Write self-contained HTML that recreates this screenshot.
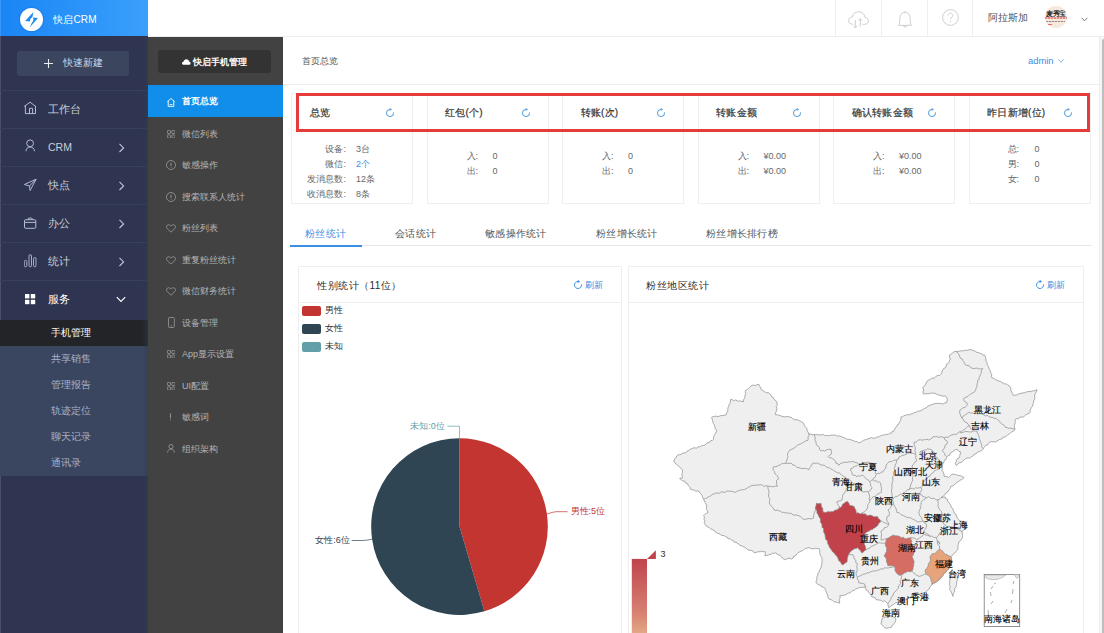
<!DOCTYPE html>
<html><head><meta charset="utf-8">
<style>
*{box-sizing:border-box;margin:0;padding:0}
html,body{width:1104px;height:633px;overflow:hidden;background:#fff;font-family:"Liberation Sans",sans-serif;color:#333}
.abs{position:absolute}
#side{left:0;top:0;width:148px;height:633px;background:#2f3550}
#logo{left:0;top:0;width:148px;height:36px;background:linear-gradient(90deg,#1a85f5,#3aa0fd)}
#logo .c{left:20px;top:7.6px;width:23px;height:23px;border-radius:50%;background:#fff;box-shadow:0 0 2px rgba(0,40,120,0.35)}
#logo .t{left:53.2px;top:13px;font-size:10px;color:#fff;line-height:14px;letter-spacing:0.15px}
#newbtn{left:17px;top:51px;width:112px;height:25px;background:#3c455e;border-radius:3px;color:#d5dae3;font-size:10.2px;line-height:25px}
.sep{left:0;width:148px;height:1px;background:#394059}
.mi{left:0;width:148px;height:38px;color:#c9ced8;font-size:10.5px}
.mi .tx{position:absolute;left:48px;top:12px;line-height:14px}
.mi svg{position:absolute}
.sub{left:0;width:148px;height:26px;font-size:9.8px;color:#aab3c5;line-height:26px;padding-left:50.5px}
#side2{left:148px;top:37px;width:135px;height:596px;background:#424242}
#mbtn{left:158px;top:50px;width:113px;height:23px;background:#333;border-radius:3px;color:#fff;font-weight:bold;font-size:9.5px;line-height:23px;text-align:center}
.si{left:148px;width:135px;height:32px;font-size:9px;color:#b5b5b5;line-height:32px;padding-left:34px}
.si svg{position:absolute}
#hdr{left:148px;top:0;width:956px;height:37px;background:#fff;border-bottom:1px solid #ededed}
.vs{top:0;width:1px;height:36px;background:#eeeeee}
#crumb{left:302px;top:55px;font-size:9px;color:#555;line-height:12px}
#admin{left:1028px;top:55.2px;font-size:9.4px;color:#3a8ee6;line-height:12px}
.card{width:122px;height:111px;top:93px;border:1px solid #efefef;background:#fff}
.card .h{position:absolute;left:0;top:0;width:120px;height:37px;border-bottom:1px solid #f0f0f0}
.card .ht{position:absolute;left:17.5px;top:12px;font-size:10px;letter-spacing:0.25px;color:#333;line-height:13px;-webkit-text-stroke:0.2px #333}
.card svg.r{position:absolute;left:93px;top:13.5px}
.row{position:absolute;font-size:9px;color:#666;line-height:12px;white-space:nowrap}
.tab{top:227px;font-size:10px;color:#555;line-height:13px;letter-spacing:0.25px}
.panel{border:1px solid #efefef;background:#fff}
.ptitle{font-size:10px;color:#2a2a2a;line-height:13px;letter-spacing:0.5px}
.refresh{font-size:9px;color:#3a88e0;line-height:12px;margin-top:0.4px}
.lg{left:302px;width:19px;height:10px;border-radius:2px}
.lgt{left:324.5px;font-size:9px;color:#333;line-height:12px;margin-top:-0.5px}
</style></head><body>

<!-- left sidebar -->
<div id="side" class="abs"></div>
<div id="logo" class="abs">
  <div class="c abs"></div>
  <svg class="abs" style="left:20px;top:8px" width="23" height="23" viewBox="0 0 23 23"><path d="M13.5 4.1 L5.1 13.1 L10.2 13.6 C9.6 12.3 10 10.6 12.4 8.9 Z" fill="#1a8cf0"/><path d="M18 10 L12.6 9.4 C13.8 10.6 13.8 12.6 12 14.6 L9.6 19.4 Z" fill="#1a8cf0"/></svg>
  <div class="t abs">快启CRM</div>
</div>
<div class="abs" style="left:0;top:0;width:1px;height:633px;background:rgba(255,255,255,0.14)"></div>
<div id="newbtn" class="abs"><svg style="position:absolute;left:27px;top:7.5px" width="9" height="9" viewBox="0 0 9 9"><path d="M4.5 0 V9 M0 4.5 H9" stroke="#e8ebf0" stroke-width="1.1"/></svg><span style="position:absolute;left:46.2px;top:-0.8px">快速新建</span></div>
<div class="sep abs" style="top:90px"></div>
<div class="mi abs" style="top:90px"><svg style="left:24px;top:11px" width="13" height="14" viewBox="0 0 13 14"><path d="M0.2 5.4 L6.1 1.2 L11.9 5.7 M1.4 4.6 V12.6 H11.5 V4.8 M5.5 12.6 V7.3 H8.6 V12.6" fill="none" stroke="#b4bccf" stroke-width="1" stroke-linejoin="round"/></svg><span class="tx">工作台</span></div>
<div class="sep abs" style="top:128px"></div>
<div class="mi abs" style="top:128px"><svg style="left:24px;top:11px" width="13" height="14" viewBox="0 0 13 14"><circle cx="6.1" cy="4.3" r="3.4" fill="none" stroke="#b4bccf" stroke-width="1"/><path d="M2 11.8 C2 9.5 3.8 8.1 6.1 8.1 C8.4 8.1 10.5 9.5 10.5 11.8" fill="none" stroke="#b4bccf" stroke-width="1" stroke-linecap="round"/></svg><span class="tx">CRM</span><svg style="left:117.5px;top:15px" width="8" height="11" viewBox="0 0 8 11"><path d="M1.5 0.8 L5.6 4.9 L1.5 9" fill="none" stroke="#c0c6d2" stroke-width="1.1"/></svg></div>
<div class="sep abs" style="top:166px"></div>
<div class="mi abs" style="top:166px"><svg style="left:24px;top:12px" width="14" height="14" viewBox="0 0 14 14"><path d="M12.1 1.2 L0.4 6.5 L5.5 8 L6.1 12.5 Z M5.5 8 L12.1 1.2" fill="none" stroke="#b4bccf" stroke-width="1" stroke-linejoin="round"/></svg><span class="tx">快点</span><svg style="left:117.5px;top:15px" width="8" height="11" viewBox="0 0 8 11"><path d="M1.5 0.8 L5.6 4.9 L1.5 9" fill="none" stroke="#c0c6d2" stroke-width="1.1"/></svg></div>
<div class="sep abs" style="top:204px"></div>
<div class="mi abs" style="top:204px"><svg style="left:24px;top:12px" width="13" height="13" viewBox="0 0 13 13"><rect x="0.5" y="3.7" width="11.3" height="8.6" rx="1.2" fill="none" stroke="#b4bccf" stroke-width="1"/><path d="M3.9 3.7 Q4 2.1 5 2.1 H7.4 Q8.4 2.1 8.5 3.7 M0.5 6.4 H11.8" fill="none" stroke="#b4bccf" stroke-width="1"/></svg><span class="tx">办公</span><svg style="left:117.5px;top:15px" width="8" height="11" viewBox="0 0 8 11"><path d="M1.5 0.8 L5.6 4.9 L1.5 9" fill="none" stroke="#c0c6d2" stroke-width="1.1"/></svg></div>
<div class="sep abs" style="top:242px"></div>
<div class="mi abs" style="top:242px"><svg style="left:24px;top:11.5px" width="13" height="14" viewBox="0 0 13 14"><rect x="0.3" y="6.4" width="2.5" height="6.4" rx="1.25" fill="none" stroke="#b4bccf" stroke-width="0.9"/><rect x="5" y="0.7" width="2.5" height="12.1" rx="1.25" fill="none" stroke="#b4bccf" stroke-width="0.9"/><rect x="9.5" y="3.5" width="2.5" height="9.3" rx="1.25" fill="none" stroke="#b4bccf" stroke-width="0.9"/></svg><span class="tx">统计</span><svg style="left:117.5px;top:15px" width="8" height="11" viewBox="0 0 8 11"><path d="M1.5 0.8 L5.6 4.9 L1.5 9" fill="none" stroke="#c0c6d2" stroke-width="1.1"/></svg></div>
<div class="sep abs" style="top:280px"></div>
<div class="mi abs" style="top:280px;color:#fff"><svg style="left:25.3px;top:14.2px" width="11" height="11" viewBox="0 0 11 11"><rect x="0" y="0" width="4.4" height="4.4" fill="#fff"/><rect x="5.8" y="0" width="4.4" height="4.4" fill="#fff"/><rect x="0" y="5.8" width="4.4" height="4.4" fill="#fff"/><rect x="5.8" y="5.8" width="4.4" height="4.4" fill="#fff"/></svg><span class="tx">服务</span><svg style="left:115.5px;top:15.5px" width="11" height="8" viewBox="0 0 11 8"><path d="M0.8 1.2 L5 5.4 L9.2 1.2" fill="none" stroke="#fff" stroke-width="1.2"/></svg></div>
<div class="abs" style="left:0;top:320px;width:148px;height:156px;background:#3a4560"></div>
<div class="sub abs" style="top:320px;background:#232427;color:#fff">手机管理</div>
<div class="sub abs" style="top:346px">共享销售</div>
<div class="sub abs" style="top:372px">管理报告</div>
<div class="sub abs" style="top:398px">轨迹定位</div>
<div class="sub abs" style="top:424px">聊天记录</div>
<div class="sub abs" style="top:450px">通讯录</div>

<!-- second sidebar -->
<div class="abs" style="left:142px;top:37px;width:6px;height:596px;background:linear-gradient(90deg,rgba(48,62,78,0),rgba(48,62,78,0.5))"></div>
<div id="side2" class="abs"></div>
<div id="mbtn" class="abs"></div><svg class="abs" style="left:182px;top:58.8px" width="8.6" height="6" viewBox="0 0 10 7"><path d="M2 6.8 C0.6 6.8 0 5.9 0 5 C0 4 0.8 3.3 1.8 3.3 C2 1.5 3.4 0.2 5.2 0.2 C6.8 0.2 8 1.3 8.3 2.8 C9.4 3 10 3.9 10 4.9 C10 6 9.2 6.8 8 6.8 Z" fill="#fff"/></svg><div class="abs" style="left:193px;top:55.5px;font-size:9px;font-weight:bold;color:#fff;line-height:12px">快启手机管理</div>
<div class="si abs" style="top:85px;height:32px;background:#118ee9;color:#fff;font-weight:bold"><svg style="left:19px;top:12.8px" width="8" height="9" viewBox="0 0 8 9"><path d="M0.4 3.6 L4 0.5 L7.6 3.6 M1.2 3 V8.4 H6.8 V3 M2.6 6.6 H5.4" fill="none" stroke="#fff" stroke-width="0.9"/></svg>首页总览</div>
<div class="si abs" style="top:117.5px"><svg style="left:19px;top:12px" width="8.4" height="8.4" viewBox="0 0 8.4 8.4"><rect x="0.4" y="0.4" width="3.1" height="3.1" rx="0.6" fill="none" stroke="#9c9c9c" stroke-width="0.8"/><rect x="4.9" y="0.4" width="3.1" height="3.1" rx="0.6" fill="none" stroke="#9c9c9c" stroke-width="0.8"/><rect x="0.4" y="4.9" width="3.1" height="3.1" rx="0.6" fill="none" stroke="#9c9c9c" stroke-width="0.8"/><rect x="4.9" y="4.9" width="3.1" height="3.1" rx="0.6" fill="none" stroke="#9c9c9c" stroke-width="0.8"/></svg>微信列表</div>
<div class="si abs" style="top:149px"><svg style="left:18.3px;top:11px" width="10" height="10" viewBox="0 0 10 10"><circle cx="5" cy="5" r="4.5" fill="none" stroke="#9c9c9c" stroke-width="0.8"/><path d="M5 2.6 V5.9 M5 6.9 V7.6" stroke="#9c9c9c" stroke-width="0.9"/></svg>敏感操作</div>
<div class="si abs" style="top:180.5px"><svg style="left:18.3px;top:11px" width="10" height="10" viewBox="0 0 10 10"><circle cx="5" cy="5" r="4.5" fill="none" stroke="#9c9c9c" stroke-width="0.8"/><path d="M5 2.6 V5.9 M5 6.9 V7.6" stroke="#9c9c9c" stroke-width="0.9"/></svg>搜索联系人统计</div>
<div class="si abs" style="top:212px"><svg style="left:18.2px;top:12px" width="10" height="8.6" viewBox="0 0 11 9.4"><path d="M5.5 9 L1.3 5 C0 3.6 0.4 1 2.8 0.8 C4 0.7 5 1.5 5.5 2.3 C6 1.5 7 0.7 8.2 0.8 C10.6 1 11 3.6 9.7 5 Z" fill="none" stroke="#9c9c9c" stroke-width="0.9"/></svg>粉丝列表</div>
<div class="si abs" style="top:243.5px"><svg style="left:18.2px;top:12px" width="10" height="8.6" viewBox="0 0 11 9.4"><path d="M5.5 9 L1.3 5 C0 3.6 0.4 1 2.8 0.8 C4 0.7 5 1.5 5.5 2.3 C6 1.5 7 0.7 8.2 0.8 C10.6 1 11 3.6 9.7 5 Z" fill="none" stroke="#9c9c9c" stroke-width="0.9"/></svg>重复粉丝统计</div>
<div class="si abs" style="top:275px"><svg style="left:18.2px;top:12px" width="10" height="8.6" viewBox="0 0 11 9.4"><path d="M5.5 9 L1.3 5 C0 3.6 0.4 1 2.8 0.8 C4 0.7 5 1.5 5.5 2.3 C6 1.5 7 0.7 8.2 0.8 C10.6 1 11 3.6 9.7 5 Z" fill="none" stroke="#9c9c9c" stroke-width="0.9"/></svg>微信财务统计</div>
<div class="si abs" style="top:306.5px"><svg style="left:20px;top:10.5px" width="7" height="11" viewBox="0 0 7 11"><rect x="0.5" y="0.5" width="5.8" height="10" rx="0.9" fill="none" stroke="#9c9c9c" stroke-width="0.8"/><path d="M2.6 8.8 H4.2" stroke="#9c9c9c" stroke-width="0.7"/></svg>设备管理</div>
<div class="si abs" style="top:338px"><svg style="left:19px;top:12px" width="8.4" height="8.4" viewBox="0 0 8.4 8.4"><rect x="0.4" y="0.4" width="3.1" height="3.1" rx="0.6" fill="none" stroke="#9c9c9c" stroke-width="0.8"/><rect x="4.9" y="0.4" width="3.1" height="3.1" rx="0.6" fill="none" stroke="#9c9c9c" stroke-width="0.8"/><rect x="0.4" y="4.9" width="3.1" height="3.1" rx="0.6" fill="none" stroke="#9c9c9c" stroke-width="0.8"/><rect x="4.9" y="4.9" width="3.1" height="3.1" rx="0.6" fill="none" stroke="#9c9c9c" stroke-width="0.8"/></svg>App显示设置</div>
<div class="si abs" style="top:369.5px"><svg style="left:19px;top:12px" width="8.4" height="8.4" viewBox="0 0 8.4 8.4"><rect x="0.4" y="0.4" width="3.1" height="3.1" rx="0.6" fill="none" stroke="#9c9c9c" stroke-width="0.8"/><rect x="4.9" y="0.4" width="3.1" height="3.1" rx="0.6" fill="none" stroke="#9c9c9c" stroke-width="0.8"/><rect x="0.4" y="4.9" width="3.1" height="3.1" rx="0.6" fill="none" stroke="#9c9c9c" stroke-width="0.8"/><rect x="4.9" y="4.9" width="3.1" height="3.1" rx="0.6" fill="none" stroke="#9c9c9c" stroke-width="0.8"/></svg>UI配置</div>
<div class="si abs" style="top:401px"><svg style="left:21px;top:12px" width="3" height="8" viewBox="0 0 3 8"><path d="M1.5 0.3 V5.2 M1.5 6.4 V7.4" stroke="#9c9c9c" stroke-width="0.9"/></svg>敏感词</div>
<div class="si abs" style="top:432.5px"><svg style="left:19px;top:11.5px" width="8" height="9" viewBox="0 0 8 9"><circle cx="4" cy="2.6" r="2.1" fill="none" stroke="#9c9c9c" stroke-width="0.8"/><path d="M0.6 8.6 C0.6 6.4 2 5.2 4 5.2 C6 5.2 7.4 6.4 7.4 8.6" fill="none" stroke="#9c9c9c" stroke-width="0.8"/></svg>组织架构</div>

<!-- header -->
<div id="hdr" class="abs"></div>
<div class="vs abs" style="left:835px"></div>
<div class="vs abs" style="left:881px"></div>
<div class="vs abs" style="left:927px"></div>
<div class="vs abs" style="left:972px"></div>
<svg class="abs" style="left:848px;top:10.5px" width="21" height="18" viewBox="0 0 21 18"><path d="M5.2 13.3 C2.2 13.3 0.6 11.6 0.6 9.6 C0.6 7.6 2.2 6.1 4.2 6.1 C4.8 2.9 7.3 0.7 10.5 0.7 C13.9 0.7 16.4 3 16.9 6.2 C19 6.4 20.4 8 20.4 9.9 C20.4 11.9 18.9 13.3 16.8 13.3 L14.6 13.3" fill="none" stroke="#c8c8c8" stroke-width="0.9"/><path d="M12.3 15.5 V7.8 M10.4 9.7 L12.3 7.8 L14.2 9.7 M7.3 9 V16.8 M5.4 14.9 L7.3 16.8 L9.2 14.9" fill="none" stroke="#c8c8c8" stroke-width="0.9"/></svg>
<svg class="abs" style="left:896.5px;top:10px" width="16" height="18" viewBox="0 0 16 18"><path d="M1.6 15.4 C2.6 14 2.8 12.4 2.8 8.6 C2.8 4.9 5 2.2 8 2.2 C11 2.2 13.2 4.9 13.2 8.6 C13.2 12.4 13.4 14 14.4 15.4 Z M6.4 15.6 C6.4 17.4 9.6 17.4 9.6 15.6 M8 2.2 V1" fill="none" stroke="#c8c8c8" stroke-width="0.9" stroke-linejoin="round"/></svg>
<svg class="abs" style="left:941.5px;top:9.4px" width="17" height="17" viewBox="0 0 17 17"><circle cx="8.5" cy="8.5" r="7.9" fill="none" stroke="#c8c8c8" stroke-width="0.9"/><path d="M6.2 6.6 C6.2 5.1 7.2 4.3 8.5 4.3 C9.8 4.3 10.8 5.1 10.8 6.4 C10.8 8 8.6 8.2 8.6 10.2" fill="none" stroke="#c8c8c8" stroke-width="0.9"/><circle cx="8.6" cy="12.4" r="0.6" fill="#c8c8c8"/></svg>
<div class="abs" style="left:988px;top:11px;font-size:10.3px;color:#555;line-height:14px">阿拉斯加</div>
<div class="abs" style="left:1044.8px;top:5.6px;width:22.4px;height:22.6px;border-radius:50%;background:#f6e8dc;overflow:hidden">
<div class="abs" style="left:1.1px;top:4.4px;font-size:6.6px;font-weight:bold;color:#262626;line-height:7px;letter-spacing:-0.2px">麦秀宝</div>
<div class="abs" style="left:0.5px;top:11px;width:21.5px;height:2.2px;background:repeating-linear-gradient(90deg,#e98a88 0 2px,#f3c4bc 2px 3px)"></div>
<div class="abs" style="left:1.3px;top:15.3px;width:19px;height:1.5px;background:repeating-linear-gradient(90deg,#9a8e88 0 2px,#d2c6be 2px 3px)"></div>
<div class="abs" style="left:3.5px;top:18.2px;width:3.6px;height:1.5px;background:#e26a6a"></div>
</div>
<svg class="abs" style="left:1080.5px;top:16.5px" width="7" height="5" viewBox="0 0 7 5"><path d="M0.6 0.8 L3.5 3.8 L6.4 0.8" fill="none" stroke="#777" stroke-width="1"/></svg>

<!-- content -->
<div id="crumb" class="abs">首页总览</div>
<div id="admin" class="abs">admin</div><svg class="abs" style="left:1057.8px;top:59px" width="6" height="4" viewBox="0 0 6 4"><path d="M0.4 0.5 L3 3.2 L5.6 0.5" fill="none" stroke="#5a9ee6" stroke-width="0.8"/></svg>
<div class="abs" style="left:283px;top:84px;width:816px;height:1px;background:#eeeeee"></div>
<div class="abs" style="left:1099px;top:37px;width:1px;height:596px;background:#eeeeee"></div>
<div class="abs" style="left:1100px;top:37px;width:4px;height:596px;background:#f5f5f5"></div><div class="abs" style="left:1101.6px;top:39px;width:3px;height:594px;background:#bdbdbd;border-radius:2px 0 0 0"></div>

<div class="card abs" style="left:291.0px"><div class="h"><div class="ht">总览</div><svg class="r" width="10" height="10" viewBox="0 0 10 10"><path d="M5 1.5 A3.5 3.5 0 1 0 8.45 4.39" fill="none" stroke="#62a9e4" stroke-width="1.1"/><path d="M4.7 -0.1 L7.1 1.5 L4.7 3.1 Z" fill="#62a9e4"/></svg></div><div class="row" style="right:66px;top:49.19999999999999px;text-align:right">设备:</div><div class="row" style="left:64px;top:49.19999999999999px;">3台</div><div class="row" style="right:66px;top:64.19999999999999px;text-align:right">微信:</div><div class="row" style="left:64px;top:64.19999999999999px;color:#3a8ee6">2个</div><div class="row" style="right:66px;top:79.19999999999999px;text-align:right">发消息数:</div><div class="row" style="left:64px;top:79.19999999999999px;">12条</div><div class="row" style="right:66px;top:94.19999999999999px;text-align:right">收消息数:</div><div class="row" style="left:64px;top:94.19999999999999px;">8条</div></div>
<div class="card abs" style="left:426.5px"><div class="h"><div class="ht">红包(个)</div><svg class="r" width="10" height="10" viewBox="0 0 10 10"><path d="M5 1.5 A3.5 3.5 0 1 0 8.45 4.39" fill="none" stroke="#62a9e4" stroke-width="1.1"/><path d="M4.7 -0.1 L7.1 1.5 L4.7 3.1 Z" fill="#62a9e4"/></svg></div><div class="row" style="left:39px;top:56px">入:</div><div class="row" style="left:65px;top:56px">0</div><div class="row" style="left:39px;top:71px">出:</div><div class="row" style="left:65px;top:71px">0</div></div>
<div class="card abs" style="left:562.0px"><div class="h"><div class="ht">转账(次)</div><svg class="r" width="10" height="10" viewBox="0 0 10 10"><path d="M5 1.5 A3.5 3.5 0 1 0 8.45 4.39" fill="none" stroke="#62a9e4" stroke-width="1.1"/><path d="M4.7 -0.1 L7.1 1.5 L4.7 3.1 Z" fill="#62a9e4"/></svg></div><div class="row" style="left:39px;top:56px">入:</div><div class="row" style="left:65px;top:56px">0</div><div class="row" style="left:39px;top:71px">出:</div><div class="row" style="left:65px;top:71px">0</div></div>
<div class="card abs" style="left:697.5px"><div class="h"><div class="ht">转账金额</div><svg class="r" width="10" height="10" viewBox="0 0 10 10"><path d="M5 1.5 A3.5 3.5 0 1 0 8.45 4.39" fill="none" stroke="#62a9e4" stroke-width="1.1"/><path d="M4.7 -0.1 L7.1 1.5 L4.7 3.1 Z" fill="#62a9e4"/></svg></div><div class="row" style="left:39px;top:56px">入:</div><div class="row" style="left:65px;top:56px">¥0.00</div><div class="row" style="left:39px;top:71px">出:</div><div class="row" style="left:65px;top:71px">¥0.00</div></div>
<div class="card abs" style="left:833.0px"><div class="h"><div class="ht">确认转账金额</div><svg class="r" width="10" height="10" viewBox="0 0 10 10"><path d="M5 1.5 A3.5 3.5 0 1 0 8.45 4.39" fill="none" stroke="#62a9e4" stroke-width="1.1"/><path d="M4.7 -0.1 L7.1 1.5 L4.7 3.1 Z" fill="#62a9e4"/></svg></div><div class="row" style="left:39px;top:56px">入:</div><div class="row" style="left:65px;top:56px">¥0.00</div><div class="row" style="left:39px;top:71px">出:</div><div class="row" style="left:65px;top:71px">¥0.00</div></div>
<div class="card abs" style="left:968.5px"><div class="h"><div class="ht">昨日新增(位)</div><svg class="r" width="10" height="10" viewBox="0 0 10 10"><path d="M5 1.5 A3.5 3.5 0 1 0 8.45 4.39" fill="none" stroke="#62a9e4" stroke-width="1.1"/><path d="M4.7 -0.1 L7.1 1.5 L4.7 3.1 Z" fill="#62a9e4"/></svg></div><div class="row" style="left:38px;top:49.19999999999999px">总:</div><div class="row" style="left:65px;top:49.19999999999999px">0</div><div class="row" style="left:38px;top:64.19999999999999px">男:</div><div class="row" style="left:65px;top:64.19999999999999px">0</div><div class="row" style="left:38px;top:79.19999999999999px">女:</div><div class="row" style="left:65px;top:79.19999999999999px">0</div></div>
<div class="abs" style="left:296px;top:93px;width:794px;height:39px;border:3px solid #e63b3b"></div>

<!-- tabs -->
<div class="tab abs" style="left:305px;color:#3a8ee6">粉丝统计</div>
<div class="tab abs" style="left:395px">会话统计</div>
<div class="tab abs" style="left:485px">敏感操作统计</div>
<div class="tab abs" style="left:596px">粉丝增长统计</div>
<div class="tab abs" style="left:706px">粉丝增长排行榜</div>
<div class="abs" style="left:290px;top:245px;width:802px;height:1px;background:#e8e8e8"></div>
<div class="abs" style="left:290px;top:244.5px;width:72px;height:2px;background:#3a8ee6"></div>

<!-- panels -->
<div class="panel abs" style="left:298px;top:266px;width:324px;height:380px"></div>
<div class="abs" style="left:299px;top:302px;width:322px;height:1px;background:#eeeeee"></div>
<div class="ptitle abs" style="left:317px;top:279px">性别统计（11位）</div>
<svg class="abs" style="left:572.5px;top:280px" width="10" height="10" viewBox="0 0 10 10"><path d="M5 1.5 A3.5 3.5 0 1 0 8.45 4.39" fill="none" stroke="#3a8ee6" stroke-width="1"/><path d="M4.7 -0.1 L7.1 1.5 L4.7 3.1 Z" fill="#3a8ee6"/></svg><div class="refresh abs" style="left:585px;top:279px">刷新</div>
<div class="lg abs" style="top:305.8px;background:#c23531"></div><div class="lgt abs" style="top:304.8px">男性</div>
<div class="lg abs" style="top:323.6px;background:#2f4554"></div><div class="lgt abs" style="top:322.6px">女性</div>
<div class="lg abs" style="top:341.6px;background:#61a0a8"></div><div class="lgt abs" style="top:340.6px">未知</div>


<div class="panel abs" style="left:628px;top:266px;width:456px;height:380px"></div>
<div class="abs" style="left:629px;top:302px;width:454px;height:1px;background:#eeeeee"></div>
<div class="ptitle abs" style="left:646px;top:279px">粉丝地区统计</div>
<svg class="abs" style="left:1034.5px;top:280px" width="10" height="10" viewBox="0 0 10 10"><path d="M5 1.5 A3.5 3.5 0 1 0 8.45 4.39" fill="none" stroke="#3a8ee6" stroke-width="1"/><path d="M4.7 -0.1 L7.1 1.5 L4.7 3.1 Z" fill="#3a8ee6"/></svg><div class="refresh abs" style="left:1047px;top:279px">刷新</div>

<svg class="abs" style="left:0;top:0" width="1104" height="633" viewBox="0 0 1104 633">
<path d="M459.5,526.6 L459.5,438.3 A88.3,88.3 0 0 1 484.38,611.32 Z" fill="#c23531"/>
<path d="M459.5,526.6 L484.38,611.32 A88.3,88.3 0 1 1 459.5,438.3 Z" fill="#2f4554"/>
<path d="M546.9,514.0 Q553,512 556,511.7 L567.5,511.7" fill="none" stroke="#c23531" stroke-width="0.7"/>
<path d="M372.1,539.2 Q366,540.5 362.5,540.5 L351.8,540.5" fill="none" stroke="#2f4554" stroke-width="0.7"/>
<path d="M459.5,438.3 L459.5,426.2 L447.5,426.2" fill="none" stroke="#61a0a8" stroke-width="0.7"/>
<g font-size="9" dominant-baseline="central">
<text x="570.5" y="511" fill="#c23531">男性:5位</text>
<text x="315.2" y="540.3" fill="#2f4554">女性:6位</text>
<text x="410.2" y="426.4" fill="#61a0a8">未知:0位</text>
</g>
</svg>
<svg class="abs" style="left:0;top:0" width="1104" height="633" viewBox="0 0 1104 633">
<polygon points="673.8,461.8 674.3,460.2 674.8,458.7 676.2,457.5 676.7,456.0 678.1,454.8 679.9,454.8 681.4,454.0 682.8,453.0 684.6,453.0 686.2,452.4 687.3,450.9 689.1,450.5 690.2,449.1 692.0,448.7 693.5,447.8 695.2,447.9 696.9,448.1 698.3,446.7 700.0,446.9 701.4,445.8 703.2,445.5 704.9,445.1 706.2,443.8 707.6,442.8 709.5,442.7 710.5,440.7 712.3,440.5 713.5,439.2 713.5,437.4 714.1,435.8 714.8,434.3 715.7,433.0 716.7,431.6 716.5,429.8 715.0,428.5 714.9,426.6 714.3,424.9 713.3,423.4 712.8,421.7 712.3,419.6 711.6,417.5 713.1,416.6 714.7,416.3 716.4,416.2 718.1,416.6 719.7,416.0 721.3,415.5 723.0,415.6 724.6,415.1 726.2,414.9 726.4,413.1 727.6,411.6 727.9,409.9 727.8,408.0 728.7,406.4 729.1,404.7 730.1,403.1 730.3,401.4 730.5,399.6 732.2,399.6 733.7,400.8 735.5,399.9 737.1,400.6 738.6,401.3 740.4,400.8 742.0,401.5 743.6,401.8 743.3,400.0 744.5,398.5 744.9,396.9 745.0,395.2 745.7,393.6 745.2,391.8 745.8,390.2 747.3,389.4 748.5,388.3 749.8,387.2 751.0,386.1 752.3,385.1 754.0,385.4 755.7,385.4 757.2,384.5 758.9,384.4 759.4,386.2 760.9,387.5 761.0,389.4 762.3,390.4 763.8,391.1 765.1,392.2 766.7,392.7 768.5,392.8 769.8,393.8 771.0,395.1 771.7,396.7 773.4,397.5 774.0,399.2 775.3,400.3 776.4,401.6 777.0,403.3 777.4,405.0 776.2,406.6 776.9,408.3 776.6,410.0 776.2,411.6 775.3,413.2 775.6,414.9 777.3,414.6 778.8,415.3 780.4,415.7 782.0,416.4 783.6,416.6 785.2,416.9 786.9,416.3 788.5,416.7 790.1,417.1 791.8,417.6 793.2,419.0 794.8,419.9 796.8,419.6 798.5,420.3 800.1,421.1 801.7,421.8 803.2,422.9 804.0,424.4 804.7,426.1 805.9,427.4 807.0,428.8 807.2,430.6 808.1,432.2 808.7,433.8 810.5,434.1 812.3,434.8 814.2,434.4 815.9,434.8 817.6,434.6 819.3,434.8 821.0,435.0 822.8,434.2 824.4,435.5 826.1,435.4 827.8,435.6 829.5,435.6 831.3,435.1 833.0,435.2 834.7,434.9 836.4,435.5 837.9,436.2 839.7,436.0 841.3,436.6 842.8,437.3 844.4,437.8 845.9,438.6 847.4,439.4 849.2,439.3 850.8,439.7 852.3,440.3 853.9,440.8 855.4,441.6 857.1,441.6 858.5,442.7 860.3,442.6 861.8,441.6 863.3,440.4 864.9,439.9 866.6,439.4 868.3,438.8 870.0,438.3 871.5,437.5 873.3,438.3 874.9,438.2 876.4,437.2 878.0,437.0 879.7,436.5 881.2,435.5 882.9,435.0 884.6,434.9 886.3,434.3 888.2,434.6 889.6,433.2 891.4,433.2 892.0,431.4 894.1,430.9 894.7,429.2 895.4,427.5 896.9,426.5 897.4,424.6 899.0,423.7 899.5,422.0 900.6,420.5 900.9,418.8 900.9,417.0 902.7,416.7 904.2,415.6 905.9,415.3 907.5,414.5 909.5,414.8 911.0,413.9 912.8,413.7 914.3,412.6 916.1,412.3 917.4,411.2 919.3,411.2 921.0,410.6 922.4,409.7 923.9,408.9 925.4,408.1 926.9,407.3 928.1,405.9 929.8,405.5 931.3,404.7 933.0,404.3 934.6,403.6 936.3,403.4 938.0,403.5 939.7,403.3 941.5,403.7 943.2,403.9 944.8,402.9 946.5,402.8 947.1,400.9 947.2,399.0 946.5,397.1 945.1,396.0 943.2,396.2 941.5,395.8 939.9,395.3 938.2,394.8 936.6,394.2 935.1,393.3 933.5,393.3 931.8,393.0 930.2,393.2 928.6,393.8 926.9,393.7 925.3,393.7 923.7,394.2 922.9,392.6 923.4,390.9 923.5,389.2 922.7,387.6 924.2,386.3 925.3,384.8 926.2,383.0 927.0,381.2 928.5,380.0 930.2,379.6 931.5,378.3 933.3,378.2 934.9,377.7 936.1,376.2 937.7,375.5 939.5,375.5 940.8,374.2 941.9,373.0 942.1,371.2 942.9,369.8 943.8,368.4 945.6,367.6 946.3,366.1 946.4,364.3 948.1,363.4 949.1,362.1 949.6,360.5 950.3,359.0 949.6,357.1 949.4,355.2 951.1,354.3 952.4,352.9 954.0,351.8 956.0,351.4 957.8,351.8 959.4,351.1 961.0,350.7 962.8,351.1 964.4,350.1 966.1,350.5 967.8,350.2 969.4,349.5 971.1,349.7 972.6,350.3 974.1,350.9 975.6,351.4 977.0,352.5 978.6,352.6 980.1,353.4 981.7,353.6 982.9,355.2 984.6,355.2 985.3,356.7 985.7,358.2 986.0,359.8 986.1,361.5 987.2,362.8 987.1,364.5 988.1,365.8 988.6,367.4 989.1,368.9 990.3,370.2 990.3,371.9 991.1,373.3 991.8,374.7 991.3,376.6 992.2,378.0 993.9,378.3 995.3,379.4 996.7,380.4 998.4,380.9 1000.1,381.3 1001.5,382.2 1003.0,383.0 1004.5,384.0 1006.4,383.8 1007.7,385.1 1009.3,385.7 1010.3,387.2 1010.9,388.8 1010.8,390.6 1011.8,392.0 1012.4,393.6 1013.1,395.2 1014.8,395.2 1016.4,395.0 1017.8,394.0 1019.5,393.8 1021.0,393.3 1022.6,392.9 1024.3,392.8 1025.8,392.1 1027.4,391.8 1029.0,391.4 1030.7,391.6 1032.2,390.9 1033.8,390.8 1035.5,390.5 1036.9,389.5 1036.7,391.2 1035.9,392.7 1034.9,394.2 1034.5,395.9 1035.0,397.8 1034.5,399.4 1033.6,400.9 1033.6,402.7 1032.9,404.3 1032.7,406.0 1031.4,407.3 1030.8,408.9 1030.1,410.5 1030.2,412.3 1029.0,413.7 1027.2,413.9 1025.8,415.0 1024.5,416.1 1023.1,417.2 1021.1,416.9 1019.5,417.4 1018.3,419.0 1016.3,418.7 1015.0,419.9 1015.1,421.8 1015.0,423.7 1014.3,425.6 1014.5,427.5 1015.0,429.4 1013.8,430.9 1012.0,431.8 1010.4,432.8 1009.1,434.1 1007.4,435.1 1006.1,436.3 1004.6,437.0 1002.8,437.4 1001.8,439.1 999.9,439.2 998.5,440.2 997.0,441.0 995.2,442.0 993.3,441.8 991.3,441.7 989.5,442.2 988.4,443.4 987.7,445.0 985.7,445.3 984.8,446.7 983.5,447.8 982.9,449.4 981.3,450.8 979.3,451.5 977.3,452.1 976.3,453.7 974.3,454.0 973.4,455.7 971.8,456.5 970.5,457.7 968.8,458.0 966.9,458.0 965.5,458.8 964.1,459.9 962.7,461.3 961.3,462.5 959.1,462.7 957.8,464.2 956.3,465.4 955.2,463.2 956.3,462.0 956.5,460.2 957.3,458.8 958.9,458.0 959.6,456.5 960.1,454.3 960.8,452.1 958.7,451.2 957.4,449.4 955.3,449.7 953.7,451.0 951.9,452.1 950.2,453.2 949.6,455.3 947.4,456.0 946.4,457.7 946.1,459.4 944.3,460.2 944.0,461.9 943.1,463.2 942.7,464.9 941.9,466.5 942.2,468.3 942.1,470.3 943.1,472.0 944.0,474.2 944.2,476.5 946.5,476.5 948.6,477.6 950.3,475.9 951.9,474.2 953.8,474.2 955.7,474.5 957.4,475.4 959.2,475.5 960.9,475.9 962.6,476.7 964.1,477.6 962.9,478.7 961.6,479.7 959.9,480.1 958.9,481.5 957.4,482.2 955.7,483.3 954.4,484.8 952.6,485.7 950.8,486.6 950.3,488.5 948.9,489.9 948.1,491.7 946.1,492.7 945.3,494.4 943.8,495.4 942.7,496.8 941.0,497.5 943.1,497.2 945.3,497.0 945.7,498.7 947.6,499.5 947.7,501.4 949.0,502.5 949.9,504.0 950.8,505.4 951.2,507.1 952.5,508.2 953.1,509.7 953.7,511.2 954.1,512.9 955.7,513.9 956.3,515.4 956.7,517.0 957.7,518.3 958.6,519.6 959.6,520.9 961.5,521.1 963.4,521.4 965.2,522.0 965.8,523.9 965.7,525.7 965.2,527.6 964.6,529.5 962.7,530.5 961.9,532.2 962.4,533.9 962.7,535.7 962.4,537.5 961.5,539.7 959.6,541.1 958.7,542.7 958.2,544.5 958.0,546.3 958.1,548.2 957.3,549.9 956.2,551.5 954.9,552.7 953.4,553.9 952.4,555.5 950.7,556.5 951.1,558.4 951.8,560.2 951.8,562.1 950.5,563.7 949.7,565.5 949.6,567.6 947.9,569.2 946.3,570.9 945.5,572.5 943.6,573.3 943.2,575.3 941.9,576.5 940.6,578.0 939.6,579.7 937.8,580.7 936.3,582.0 934.8,582.8 933.4,583.5 931.9,584.2 931.2,585.9 929.8,587.0 929.4,588.9 927.8,589.9 926.7,591.2 925.5,592.4 923.8,592.9 921.8,593.4 919.9,594.2 917.8,593.9 916.0,595.2 913.9,595.5 911.8,595.9 910.5,597.2 908.8,597.8 907.4,598.9 905.9,599.9 903.8,600.2 901.8,601.0 899.9,601.9 897.8,602.3 895.7,602.7 893.9,603.9 892.5,605.0 890.9,605.9 888.9,607.8 888.2,605.9 887.9,603.9 885.9,601.9 884.5,600.8 882.6,601.6 881.2,600.4 879.6,600.1 878.0,599.9 876.2,599.7 875.2,598.0 873.7,597.2 872.0,596.9 871.1,595.5 870.3,594.0 869.0,592.9 868.3,591.2 866.4,590.3 865.7,588.5 864.6,587.0 862.8,587.4 860.9,587.3 859.0,587.7 857.3,588.5 855.6,589.0 854.3,590.2 852.6,590.7 851.2,591.8 849.9,592.9 848.1,593.1 846.6,594.2 845.0,595.0 843.2,595.3 841.5,595.5 839.7,595.8 840.3,597.6 839.2,599.5 839.6,601.4 839.7,603.2 837.8,602.5 835.8,602.0 833.8,601.7 832.5,600.4 830.8,599.5 829.0,599.0 827.9,597.3 827.7,595.4 827.1,593.7 826.2,592.0 825.6,590.2 825.0,588.5 823.7,587.3 821.7,587.0 820.8,585.3 818.9,584.9 817.3,584.1 816.2,582.6 816.2,580.8 817.1,579.1 816.6,577.3 817.7,575.6 817.6,573.8 819.0,572.7 819.3,570.8 820.0,569.3 821.0,567.9 821.2,566.1 821.7,564.4 822.0,562.7 822.0,560.9 822.0,559.1 821.7,557.3 820.4,555.7 820.0,553.9 819.7,552.1 819.8,550.2 819.0,548.5 817.3,548.7 815.7,548.2 814.0,548.9 812.3,548.8 810.7,548.4 809.1,547.7 807.4,547.9 805.7,548.5 804.1,549.3 802.8,550.6 801.1,551.1 799.5,551.9 797.9,552.7 796.7,554.0 795.8,555.6 793.7,556.1 793.2,558.0 791.6,559.0 789.6,558.3 787.7,558.4 785.7,559.7 783.7,559.0 782.3,558.0 781.3,556.5 780.2,555.3 778.4,554.9 776.9,554.0 775.8,552.7 774.3,553.5 772.5,553.0 771.2,554.4 769.5,554.4 768.1,555.4 766.4,555.3 764.8,555.8 765.4,553.5 764.8,551.1 763.3,551.9 761.6,551.2 760.0,551.9 758.4,551.6 756.8,552.2 755.3,552.7 753.5,552.2 752.4,550.6 750.5,550.3 748.7,550.1 747.1,549.3 745.8,547.9 744.4,547.1 742.9,546.4 741.4,545.8 739.9,545.2 738.6,544.1 737.2,543.4 736.1,542.0 734.1,542.2 733.2,540.5 731.6,540.0 730.2,538.8 728.2,538.9 727.1,537.1 725.4,536.6 724.0,535.6 722.0,535.5 720.5,534.6 719.0,533.7 717.0,533.0 715.2,532.0 714.2,530.3 712.4,529.7 710.7,528.9 709.3,527.7 707.7,526.8 706.1,525.9 705.0,524.3 704.2,522.6 704.9,520.7 703.9,519.1 704.5,517.2 703.6,515.6 704.9,514.3 706.4,513.4 708.0,512.7 707.5,511.0 706.6,509.4 706.3,507.7 706.6,505.7 706.0,504.0 705.0,502.5 704.7,500.9 703.6,499.6 702.9,497.9 702.3,496.1 701.5,494.5 700.1,493.2 699.2,491.6 697.5,490.9 695.6,491.3 694.1,490.0 692.2,489.9 690.5,489.4 690.1,487.8 689.2,486.4 688.1,485.2 687.6,483.6 685.7,483.1 684.7,481.1 682.5,481.0 681.2,479.6 679.6,478.5 682.5,477.8 682.1,476.1 681.9,474.3 682.4,472.6 682.6,470.8 681.8,469.1" fill="#efefef" stroke="#8a8a8a" stroke-width="0.7" stroke-linejoin="round"/>
<polyline points="703.6,499.6 704.9,498.5 706.7,498.2 707.9,497.0 709.6,496.5 711.0,495.5 712.3,494.4 714.0,494.0 715.5,493.2 717.1,492.9 719.0,493.4 720.4,492.5 722.0,491.7 723.8,492.3 725.4,492.1 726.9,491.0 728.5,491.2 730.2,491.1 731.8,491.5 733.5,491.6 735.0,492.5 736.4,491.7 737.9,490.8 739.4,490.5 741.0,489.9 742.7,489.8 744.3,489.6 745.8,488.9 747.2,488.0 748.8,487.1 750.4,486.2 752.1,485.5 753.8,485.4 755.4,485.1 757.1,485.0 758.8,485.1 760.7,484.7 762.5,485.3 764.2,486.5 766.1,485.5 767.9,486.3 769.8,486.3 771.7,486.5 773.6,486.8 775.5,485.9 777.4,486.3" fill="none" stroke="#8a8a8a" stroke-width="0.7" stroke-linejoin="round"/>
<polyline points="777.4,486.3 776.8,484.4 776.5,482.5 776.5,480.5 777.7,479.4 779.0,478.5 777.8,477.3 777.3,475.6 776.1,474.4 774.6,473.5 774.8,471.8 773.3,470.4 773.0,468.8 773.3,467.0 775.1,466.7 777.0,466.4 778.5,465.3 780.3,464.9 781.8,463.6 783.7,463.6 785.5,463.2 786.5,461.7 786.9,460.0 787.4,458.3 788.0,456.7 787.5,454.7 787.8,453.0 788.8,451.5 790.0,450.0 791.8,449.3 793.4,448.4 795.1,447.6 796.4,446.2 797.7,444.9 799.4,444.4 801.2,443.8 802.6,442.6 804.3,442.0 805.7,440.6 807.6,440.5 808.3,438.9 807.8,437.1 809.0,435.6 808.7,433.8" fill="none" stroke="#8a8a8a" stroke-width="0.7" stroke-linejoin="round"/>
<polyline points="767.9,486.3 767.9,488.1 768.5,489.8 768.9,491.5 768.9,493.2 768.5,495.0 768.6,496.8 769.6,498.4 769.8,500.2 769.3,502.0 769.5,503.7 770.6,505.3 772.0,506.8 773.3,508.2 774.2,510.0 775.8,510.5 777.5,510.0 779.0,510.8 780.6,511.4 782.0,512.4 783.7,512.3 785.2,513.0 786.9,512.8 788.5,513.2 790.2,513.2 791.8,513.7 793.1,515.0 794.8,515.1 796.5,514.9 798.0,515.6 799.9,516.0 801.2,517.5 802.6,518.7 804.3,519.5 806.2,519.1 808.0,518.5 810.0,518.8 811.9,518.8 813.7,517.9 813.6,516.2 813.7,514.5 814.4,513.0 814.9,511.4 815.6,509.8 815.2,508.1 816.4,506.6 816.6,505.0 816.6,503.3" fill="none" stroke="#8a8a8a" stroke-width="0.7" stroke-linejoin="round"/>
<polyline points="814.3,434.4 814.6,436.2 815.4,437.9 814.7,439.9 815.9,441.5 816.0,443.3 816.6,445.1 818.3,446.2 819.3,447.7 819.7,449.7 821.0,451.0 822.6,450.4 824.4,451.1 826.0,450.2 827.6,449.5 829.3,449.3 831.0,449.4 831.4,451.6 831.5,453.8 829.7,455.0 828.2,456.5 829.4,457.9 831.4,457.8 832.8,458.9 834.2,459.9 835.6,461.0 835.9,463.1 838.0,463.7 838.7,465.4 839.8,464.0 841.1,463.2 842.7,462.8 844.2,462.1 846.0,462.4 847.8,462.2 849.6,461.8 851.4,461.9 853.1,461.0 854.2,462.3 856.0,462.4 857.5,463.1 858.6,464.3 860.5,464.5 862.2,463.8 863.7,462.3 865.7,462.8 867.4,462.1 869.1,462.5 870.8,463.0 872.5,463.5 874.1,464.3 874.9,465.8 875.5,467.4 875.5,469.2 875.8,470.9 875.3,472.7 876.3,474.2 877.8,473.2 879.8,473.7 881.1,472.2 882.9,472.0 883.5,470.5 884.9,469.4 885.7,468.0 886.0,466.3 886.4,464.6 887.7,463.5 888.5,462.1 890.1,461.5 891.9,461.8 893.2,460.4 894.9,460.2 896.6,459.9 898.3,459.2 898.9,457.1 900.6,456.4 902.1,455.4 904.1,455.1 906.0,454.3 907.7,453.2 909.7,452.8 911.6,453.1 913.6,453.4 915.4,454.3 915.8,452.5 914.7,450.9 915.3,449.1 915.3,447.3 914.4,445.7 914.1,444.0 914.3,442.2 916.1,442.0 917.3,440.9 918.7,440.0 920.4,439.7 922.0,440.3 923.7,439.7 925.4,439.7 927.0,439.3 928.7,440.0 930.4,439.1 932.0,438.2 933.1,436.6 935.3,436.8 937.5,436.6 939.1,437.5 941.0,436.5 942.6,437.1 944.2,437.7 945.7,437.2 947.4,437.3 949.0,436.8 950.2,435.5 951.7,434.9 953.3,434.6 954.9,434.2 956.6,434.3 957.9,433.2 959.1,431.9 961.0,431.7 962.4,430.6 963.9,429.8 965.3,428.8 966.6,427.6 967.8,426.3 969.4,425.6" fill="none" stroke="#8a8a8a" stroke-width="0.7" stroke-linejoin="round"/>
<polyline points="971.3,429.4 970.1,427.6 969.4,425.6 968.0,424.5 967.1,422.8 965.1,422.2 964.0,420.8 963.2,419.0 961.7,418.0 960.9,416.2 960.2,414.3 959.6,412.5 959.8,410.4 961.4,409.3 962.7,407.9 964.8,407.5 966.2,406.3 967.4,404.7 967.0,402.9 965.2,402.0 964.1,400.7 963.6,399.0 964.7,397.6 966.4,397.1 968.0,396.4 969.3,395.1 970.5,393.9 972.1,393.2 973.7,392.5 975.0,391.4 975.7,389.6 976.3,387.7 977.0,385.8 977.0,383.8 977.8,382.4 977.6,380.6 979.2,379.4 979.0,377.6 979.9,376.2 980.3,374.6 981.3,373.2 981.2,371.4 981.8,369.9 982.7,368.5 980.8,368.9 978.9,369.0 977.0,368.0 975.1,368.4 973.2,368.5 971.6,368.0 970.1,367.1 968.9,365.6 967.0,365.5 965.5,364.7 964.2,363.6 964.0,361.8 962.8,360.6 962.3,359.0 960.3,358.4 959.8,356.7 959.2,355.1 958.3,353.8 957.4,352.4 956.0,351.4" fill="none" stroke="#8a8a8a" stroke-width="0.7" stroke-linejoin="round"/>
<polyline points="961.7,418.0 962.9,416.3 964.6,415.5 966.0,414.2 967.6,413.1 969.4,412.3 971.0,413.2 972.7,412.9 974.3,413.6 976.1,413.1 977.6,414.0 979.4,413.7 981.1,413.6 982.7,414.2 984.1,415.1 985.5,415.9 987.5,415.4 988.7,416.6 990.2,417.2 992.0,417.2 993.4,418.0 995.0,418.3 996.5,418.9 997.9,419.9 999.4,420.9 1000.3,422.5 1001.5,423.9 1003.3,424.7 1004.7,425.7 1005.5,427.5 1007.1,427.6 1008.6,428.4 1010.3,428.0 1011.9,428.5 1013.5,428.7 1015.0,429.4" fill="none" stroke="#8a8a8a" stroke-width="0.7" stroke-linejoin="round"/>
<polyline points="960.0,432.5 961.7,432.8 963.4,432.3 965.1,431.5 966.8,431.5 968.5,431.8 970.2,431.9 971.9,431.9 973.6,431.0 975.3,431.0 977.0,431.3 977.3,432.9 978.2,434.4 978.8,435.9 979.3,437.4 979.0,439.3 980.4,440.5 980.5,442.2 981.3,443.7 981.8,445.3 981.7,447.0 982.7,448.4" fill="none" stroke="#8a8a8a" stroke-width="0.7" stroke-linejoin="round"/>
<polyline points="944.2,437.7 944.7,439.6 946.6,440.6 947.5,442.2 946.9,444.0 945.2,445.1 944.8,447.0 944.1,448.7 942.5,449.9 943.0,451.8 944.5,453.1 945.0,455.1 946.4,456.5" fill="none" stroke="#8a8a8a" stroke-width="0.7" stroke-linejoin="round"/>
<polyline points="927.6,448.8 929.8,449.3 932.0,450.0 933.3,452.0 935.3,453.2 935.4,455.1 935.8,457.1 936.0,459.1 935.3,461.0 933.5,460.2 931.7,459.3 930.0,458.2 928.0,458.0 925.9,458.1 924.0,456.8 922.0,456.5 921.1,455.1 920.5,453.6 919.8,452.1 921.2,451.0 922.8,450.5 924.5,450.1 926.3,450.0 927.6,448.8" fill="none" stroke="#8a8a8a" stroke-width="0.7" stroke-linejoin="round"/>
<polyline points="935.3,457.0 937.5,458.1 939.0,460.0 939.7,461.6 940.1,463.4 940.6,465.1 941.9,466.5 940.4,467.4 938.8,468.0 937.0,468.0 937.2,466.1 936.8,464.3 935.7,462.8 935.3,461.0" fill="none" stroke="#8a8a8a" stroke-width="0.7" stroke-linejoin="round"/>
<polyline points="915.4,454.3 916.3,455.9 915.4,457.7 916.4,459.3 916.5,461.0 915.0,462.0 914.2,463.6 912.8,464.8 912.1,466.5 912.8,468.1 912.1,469.9 913.0,471.5 913.0,473.2 912.5,474.9 913.2,476.5 912.3,477.9 912.7,479.7 912.3,481.2 911.6,482.7 911.0,484.2 910.4,485.9 910.0,487.7 909.2,489.4" fill="none" stroke="#8a8a8a" stroke-width="0.7" stroke-linejoin="round"/>
<polyline points="896.6,459.9 896.7,461.7 896.1,463.4 895.1,465.0 895.0,466.8 894.1,468.4 895.0,470.3 893.9,471.9 893.3,473.5 894.0,475.4 892.6,476.9 892.7,478.7 893.1,480.4 892.2,482.1 892.1,483.8 891.8,485.4 892.1,487.2 891.8,488.8 891.5,490.5 891.6,492.2 892.1,493.8 892.0,495.5 892.5,497.1 892.7,498.8" fill="none" stroke="#8a8a8a" stroke-width="0.7" stroke-linejoin="round"/>
<polyline points="892.7,498.8 894.2,497.9 895.4,496.5 897.3,496.4 898.7,495.4 900.1,494.3 902.0,494.1 903.3,492.9 905.0,492.4 906.2,491.1 907.5,489.9 909.2,489.4" fill="none" stroke="#8a8a8a" stroke-width="0.7" stroke-linejoin="round"/>
<polyline points="941.9,466.5 940.4,467.4 939.1,468.7 937.5,469.6 935.8,470.1 934.2,470.9 933.4,472.6 931.8,473.5 930.4,474.6 929.7,476.4 927.8,477.0 927.1,478.8 925.2,479.4 924.2,480.9 923.0,482.4 922.5,484.2 922.3,486.1 920.9,487.5 919.2,487.8 917.6,488.2 915.8,487.7 914.3,489.1 912.5,488.4 910.8,488.4 909.2,489.4" fill="none" stroke="#8a8a8a" stroke-width="0.7" stroke-linejoin="round"/>
<polyline points="920.9,487.5 922.0,489.7 921.0,491.1 920.1,492.6 919.8,494.4 921.7,494.8 922.9,496.7 924.8,496.9 926.5,497.7 928.7,496.6 930.2,497.9 932.0,498.5 934.1,498.1 935.6,499.6 937.5,499.9 939.6,499.2 941.0,497.5" fill="none" stroke="#8a8a8a" stroke-width="0.7" stroke-linejoin="round"/>
<polyline points="858.6,464.3 857.3,465.7 855.6,466.2 853.7,466.6 852.6,468.2 850.8,468.7 850.7,470.7 851.9,472.3 852.0,474.2 853.3,475.4 855.2,475.3 856.4,476.5 858.3,476.0 860.3,476.1 862.0,475.0 863.5,475.9 864.8,477.1 865.8,478.5 867.2,479.5 868.8,480.4 869.6,482.0 871.1,480.5 873.0,479.8 873.4,478.2 875.2,477.3 875.7,475.7 876.3,474.2" fill="none" stroke="#8a8a8a" stroke-width="0.7" stroke-linejoin="round"/>
<polyline points="873.0,479.8 874.3,481.0 876.3,480.7 877.5,482.1 879.4,481.9 880.7,483.1 880.9,484.9 881.0,486.6 881.6,488.4 881.1,490.2 881.8,491.9 880.4,492.7 879.0,493.5 877.4,494.0 876.3,495.3 875.3,496.7 873.2,496.6 872.2,498.0 871.0,499.2 869.6,500.0" fill="none" stroke="#8a8a8a" stroke-width="0.7" stroke-linejoin="round"/>
<polyline points="851.9,482.0 853.0,483.4 854.8,483.9 855.5,485.8 857.2,486.5 858.6,487.5 860.2,488.9 861.3,490.8 863.0,492.0 864.8,491.9 866.7,491.5 868.5,492.0" fill="none" stroke="#8a8a8a" stroke-width="0.7" stroke-linejoin="round"/>
<polyline points="785.5,463.2 787.8,463.5 790.0,463.2 791.7,463.4 792.7,465.1 794.6,465.1 795.8,466.3 797.0,467.5 798.8,467.6 800.4,468.1 802.1,468.6 803.9,468.4 805.6,468.4 807.3,468.8 808.8,469.8 809.3,468.1 810.7,467.0 811.4,465.4 812.3,464.0 813.2,462.6 814.7,463.6 816.7,463.0 818.3,463.5 819.9,464.3 821.4,465.2 823.2,465.0 824.8,465.6 826.1,466.8 827.6,467.6 829.5,467.9 831.0,469.1 832.7,469.7 834.2,470.9 835.8,471.8 837.5,472.7 839.4,473.0 840.9,474.2 842.2,475.5 843.7,476.4 845.3,477.2 846.4,478.7 847.5,480.0 849.3,480.0 850.8,480.8 851.9,482.0 851.2,483.7 849.5,484.6 848.2,485.8 847.5,487.5 846.3,488.6 845.9,490.3 845.1,491.7 844.6,493.2 843.1,494.2 842.5,496.1 842.3,498.1 842.0,500.0 840.2,500.9 838.3,501.1 836.5,502.0 837.7,503.6 838.3,505.7 840.0,507.0 838.5,508.2 837.6,509.9" fill="none" stroke="#8a8a8a" stroke-width="0.7" stroke-linejoin="round"/>
<polyline points="869.6,482.0 870.7,483.7 870.6,485.9 871.9,487.5 871.3,489.4 869.6,490.5 868.5,492.0 868.9,493.6 869.3,495.1 869.8,496.7 869.0,498.5 869.6,500.0 869.8,501.9 868.6,503.5 867.7,505.2 867.8,507.1 867.0,509.0 865.7,510.6 864.2,511.9 861.9,513.2" fill="none" stroke="#8a8a8a" stroke-width="0.7" stroke-linejoin="round"/>
<polyline points="892.7,498.8 892.8,500.6 893.2,502.3 893.5,504.0 892.3,505.1 891.0,506.1 890.5,507.9 889.3,509.0 888.0,510.0 889.0,511.9 889.5,514.0 889.1,515.7 887.2,516.4 886.7,518.0 886.8,519.8 887.3,521.6 888.7,523.1 888.5,525.0 887.2,523.8 885.6,523.1 883.9,522.6 882.5,521.5 880.8,521.0" fill="none" stroke="#8a8a8a" stroke-width="0.7" stroke-linejoin="round"/>
<polyline points="893.5,504.0 894.3,505.7 895.3,507.3 896.1,508.9 896.6,510.7 897.0,512.5 898.8,512.6 900.2,513.7 901.5,515.0 903.2,515.4 904.9,516.3 906.6,517.2 908.4,517.7 910.4,517.7 912.1,518.7 913.7,519.6 915.4,520.3 916.9,521.5 918.7,522.0 920.9,521.5 923.1,520.9" fill="none" stroke="#8a8a8a" stroke-width="0.7" stroke-linejoin="round"/>
<polyline points="926.5,497.7 925.2,499.1 923.4,499.7 922.0,501.0 920.9,502.4 921.4,504.3 920.1,505.6 920.8,507.5 920.0,509.0 919.5,510.6 918.7,512.1 919.1,513.7 919.6,515.3 920.6,516.7 921.9,517.9 921.9,519.7 923.1,520.9" fill="none" stroke="#8a8a8a" stroke-width="0.7" stroke-linejoin="round"/>
<polyline points="937.5,499.9 938.0,501.8 938.4,503.7 937.8,505.8 938.6,507.7 939.6,509.3 940.6,510.8 941.9,512.1 941.7,513.9 941.2,515.6 941.9,517.4 941.4,519.1 941.9,520.9 942.8,522.5 943.8,524.0 945.3,525.0 946.4,526.5 948.6,526.8 950.8,526.5 952.4,527.1 954.2,527.3 955.9,527.8 957.4,528.7 958.8,530.0 960.8,530.6 961.9,532.2" fill="none" stroke="#8a8a8a" stroke-width="0.7" stroke-linejoin="round"/>
<polyline points="923.1,520.9 924.4,523.0 926.5,524.2 926.5,525.9 926.2,527.5 925.6,529.0 924.1,530.3 924.2,532.0 925.7,532.9 927.3,533.8 928.8,534.8 929.8,536.4 931.6,536.0 933.1,537.2 934.7,537.4 936.4,537.5 937.7,536.4 938.9,535.1 939.2,533.2 940.9,532.3 941.9,530.9 943.3,529.3 945.2,528.3 946.4,526.5" fill="none" stroke="#8a8a8a" stroke-width="0.7" stroke-linejoin="round"/>
<polyline points="936.4,537.5 936.8,539.4 937.6,541.1 939.4,542.3 939.7,544.2 939.0,542.3 937.4,541.1 937.3,542.8 937.7,544.4 939.2,545.6 939.6,547.1 939.6,548.8" fill="none" stroke="#8a8a8a" stroke-width="0.7" stroke-linejoin="round"/>
<polyline points="910.9,537.7 912.9,537.9 914.9,538.4 916.5,539.7 918.3,539.0 919.8,537.9 921.2,536.6 922.9,535.7 924.2,534.2 926.0,535.1 928.0,535.4 929.8,536.4" fill="none" stroke="#8a8a8a" stroke-width="0.7" stroke-linejoin="round"/>
<polyline points="888.5,525.0 887.6,526.4 886.4,527.4 884.5,527.7 883.8,529.3 882.4,530.2 881.0,531.0 881.1,532.8 881.7,534.6 881.3,536.4 881.3,538.2 881.0,540.0 882.9,539.9 884.6,539.0 886.5,538.8" fill="none" stroke="#8a8a8a" stroke-width="0.7" stroke-linejoin="round"/>
<polyline points="866.4,549.7 867.7,548.6 869.6,548.4 870.6,546.9 872.0,546.0 874.1,545.5 875.9,544.3 877.7,543.3 879.6,542.6 881.5,543.2 883.5,543.2 885.4,543.3" fill="none" stroke="#8a8a8a" stroke-width="0.7" stroke-linejoin="round"/>
<polyline points="848.7,554.2 850.8,554.8 852.9,554.7 853.7,556.1 853.9,557.8 854.7,559.1 855.8,560.4 855.6,562.3 857.2,563.3 857.3,565.0 856.6,566.5 857.2,568.3 857.2,569.9 856.7,571.5 856.0,573.0 856.4,575.4 857.5,577.5 857.2,579.3 858.8,580.8 858.5,582.6 860.5,583.1 862.6,583.5 864.6,584.0 864.9,585.7 866.0,587.0 864.6,587.0" fill="none" stroke="#8a8a8a" stroke-width="0.7" stroke-linejoin="round"/>
<polyline points="857.5,577.5 858.9,576.2 860.7,575.7 862.3,574.7 864.0,574.0 865.7,574.0 867.0,572.7 868.8,573.2 870.1,571.8 871.7,571.6 873.4,570.8 875.4,571.1 877.2,570.4 879.0,570.0 880.7,568.9 882.8,569.1 884.4,567.9 886.4,567.9 888.1,568.0 889.6,567.6 891.2,567.5 892.8,567.0 894.3,566.5" fill="none" stroke="#8a8a8a" stroke-width="0.7" stroke-linejoin="round"/>
<polyline points="899.8,575.4 901.9,574.0 901.8,575.9 901.4,577.7 901.0,579.5 900.0,581.2 900.8,583.2 899.9,584.9 898.5,586.0 898.4,588.1 897.2,589.3 896.2,590.7 894.9,591.9 893.5,593.1 893.1,594.9 892.4,596.5 890.9,597.6 890.8,599.6 889.7,600.9 888.7,602.4 887.9,603.9" fill="none" stroke="#8a8a8a" stroke-width="0.7" stroke-linejoin="round"/>
<polyline points="912.0,570.9 913.4,572.8 915.3,574.2 916.6,575.3 918.1,575.9 919.7,576.5 921.3,575.7 923.0,575.1 924.6,574.3 926.4,574.2" fill="none" stroke="#8a8a8a" stroke-width="0.7" stroke-linejoin="round"/>
<polygon points="816.6,503.3 818.8,503.8 821.0,503.3 821.2,505.1 821.6,506.9 822.8,508.5 822.8,510.3 823.2,512.1 824.9,512.5 826.5,512.2 828.2,511.6 829.9,512.1 831.4,511.6 833.1,511.7 834.4,510.4 835.9,509.9 837.6,509.9 838.7,508.4 840.4,507.5 841.9,506.3 842.5,504.3 844.2,503.3 845.7,502.0 847.6,501.6 849.0,503.4 849.8,505.5 852.1,505.8 854.2,506.6 854.7,508.3 855.8,509.7 856.1,511.5 856.4,513.2 858.2,512.8 860.1,513.9 861.9,513.2 863.5,514.1 865.4,513.8 866.7,515.5 868.6,515.4 870.4,515.1 872.1,515.7 873.8,516.7 875.6,516.7 877.4,516.5 878.3,518.2 879.7,519.4 880.8,521.0 880.0,522.6 878.4,523.6 877.9,525.5 876.3,526.5 875.1,527.7 873.6,528.3 872.5,529.5 870.8,529.8 869.2,531.0 867.3,531.7 865.7,532.9 864.2,534.2 863.4,535.7 862.5,537.1 861.9,538.7 862.7,540.1 863.9,541.4 864.2,543.1 864.6,544.8 865.4,546.4 865.5,548.2 866.4,549.7 864.6,550.4 863.5,552.0 861.9,553.1 860.9,551.6 860.0,550.1 858.5,549.0 857.5,547.5 856.2,548.6 854.4,548.7 853.1,549.7 851.3,550.8 849.9,552.4 848.7,554.2 848.0,556.1 847.4,558.0 847.2,560.0 847.0,562.0 845.4,562.8 844.1,564.1 842.6,565.0 841.3,563.7 840.7,562.0 839.0,560.9 838.3,559.2 837.7,557.4 836.6,556.0 835.3,554.7 834.3,553.1 832.7,552.0 831.7,550.3 830.5,548.8 829.4,547.3 828.9,545.6 827.9,544.1 827.6,542.4 827.3,540.6 825.7,539.4 825.4,537.6 825.1,535.8 824.8,534.0 823.8,532.4 823.5,530.6 823.7,528.7 821.9,527.3 822.1,525.4 821.5,523.6 820.3,522.0 820.5,519.9 820.0,518.1 818.8,516.5 818.2,514.7 817.0,513.2 816.9,511.2 816.2,509.4 815.5,507.7" fill="#c1424a" stroke="#8a8a8a" stroke-width="0.7" stroke-linejoin="round"/>
<polygon points="886.5,538.8 888.3,538.1 889.9,536.9 891.6,536.1 893.2,535.0 894.7,535.8 896.5,535.8 898.2,536.1 899.8,536.6 901.3,537.7 903.3,537.3 904.7,538.5 906.5,538.8 908.7,538.1 910.9,537.7 910.8,539.4 912.0,541.0 911.1,542.8 912.0,544.4 912.7,546.0 913.7,547.5 913.9,549.3 914.2,551.0 913.6,552.9 913.4,554.9 912.0,556.5 912.8,558.3 913.6,560.2 914.2,562.1 913.6,563.9 913.7,565.8 913.1,567.6 912.9,569.4 912.0,570.9 910.5,571.7 908.8,571.5 907.2,571.6 905.7,572.6 904.2,573.1 902.9,574.2 901.1,574.3 899.8,575.4 898.1,574.4 896.5,573.1 895.6,571.6 894.9,570.0 895.2,568.0 894.3,566.5 892.7,565.8 891.0,565.8 889.3,565.7 887.7,565.4 887.4,563.5 886.5,561.8 886.5,559.9 885.9,557.8 884.3,556.5 884.7,554.8 885.6,553.3 886.4,551.7 886.5,549.9 886.7,548.2 885.9,546.6 885.4,545.0 885.4,543.3" fill="#d56d63" stroke="#8a8a8a" stroke-width="0.7" stroke-linejoin="round"/>
<polygon points="939.6,548.8 941.1,550.3 943.0,551.4 944.1,553.2 945.5,554.4 947.5,554.7 948.8,556.1 950.7,556.5 951.4,558.3 951.6,560.2 951.8,562.1 951.4,564.1 950.4,565.8 949.6,567.6 948.3,569.6 946.3,570.9 945.7,572.7 943.9,573.5 943.2,575.3 941.9,576.5 940.8,578.1 939.3,579.4 937.7,580.6 936.3,582.0 934.9,582.8 933.3,583.3 931.9,584.2 931.8,582.3 931.0,580.6 930.8,578.7 929.8,576.8 928.2,575.4 926.4,574.2 925.2,572.2 925.3,569.8 926.6,568.5 927.6,567.0 928.3,565.4 928.4,563.4 929.7,562.1 930.4,560.5 930.4,558.8 929.9,557.0 930.8,555.4 932.1,553.7 934.5,553.7 935.9,552.3 937.4,551.0" fill="#e6a47c" stroke="#8a8a8a" stroke-width="0.7" stroke-linejoin="round"/>
<polygon points="951.8,572.0 954.1,572.2 956.2,573.1 957.1,574.9 957.4,576.7 957.3,578.7 957.4,580.4 956.4,581.9 956.7,583.7 956.2,585.3 956.2,587.0 954.7,588.3 954.4,589.9 954.8,591.8 953.3,593.1 953.2,594.8 952.9,596.4 952.4,594.6 951.5,592.9 950.9,591.1 949.6,589.7 950.0,587.9 950.1,586.2 949.2,584.4 949.9,582.7 949.6,580.9" fill="#efefef" stroke="#8a8a8a" stroke-width="0.7" stroke-linejoin="round"/>
<polygon points="882.0,618.8 883.5,617.8 885.0,616.8 886.8,616.9 888.4,616.2 890.3,616.6 891.9,615.8 893.2,616.9 894.8,617.5 895.9,618.8 895.6,620.6 895.0,622.3 893.9,623.8 892.6,625.1 891.7,626.9 889.9,627.8 888.2,627.8 886.6,628.3 884.9,627.8 883.6,626.5 882.3,625.1 881.0,623.8" fill="#efefef" stroke="#8a8a8a" stroke-width="0.7" stroke-linejoin="round"/>
<rect x="984.2" y="574.4" width="35.5" height="52.2" fill="none" stroke="#777" stroke-width="0.8"/>
<path d="M984.5 575 L1006 575 C1000 580 992 581 986 578 Z" fill="#e8e8e8" stroke="#999" stroke-width="0.5"/>
<path d="M1014 574.6 L1019.5 574.6 L1017 578.5 Z" fill="#e8e8e8" stroke="#999" stroke-width="0.5"/>
<path d="M993 586 L991 589 M990.5 592 L991 596 M993 601 L991 604 M988 610 L988.5 614 M1014 581 L1013 584 M1013 589 L1012.5 594 M1012 600 L1011 603 M1007 609 L1005 613 M994 584 L996 583" stroke="#999" stroke-width="0.8" fill="none"/>
<g font-size="8.6" fill="#000" stroke="#000" stroke-width="0.15" text-anchor="middle" dominant-baseline="central">
<text x="757.4" y="426.5">新疆</text>
<text x="778.2" y="537.0">西藏</text>
<text x="841.3" y="482.0">青海</text>
<text x="853.5" y="487.0">甘肃</text>
<text x="867.8" y="467.4">宁夏</text>
<text x="899.9" y="449.4">内蒙古</text>
<text x="927.6" y="456.0">北京</text>
<text x="934.2" y="465.4">天津</text>
<text x="917.5" y="471.6">河北</text>
<text x="903.3" y="472.2">山西</text>
<text x="930.9" y="482.0">山东</text>
<text x="910.7" y="497.0">河南</text>
<text x="883.8" y="500.6">陕西</text>
<text x="853.7" y="529.3">四川</text>
<text x="868.6" y="538.7">重庆</text>
<text x="915.4" y="529.8">湖北</text>
<text x="941.5" y="518.2">江苏</text>
<text x="933.1" y="518.2">安徽</text>
<text x="958.9" y="524.6">上海</text>
<text x="948.6" y="531.4">浙江</text>
<text x="924.2" y="545.3">江西</text>
<text x="906.5" y="547.5">湖南</text>
<text x="944.1" y="564.3">福建</text>
<text x="957.3" y="573.7">台湾</text>
<text x="869.8" y="561.3">贵州</text>
<text x="846.3" y="573.8">云南</text>
<text x="880" y="590.6">广西</text>
<text x="909.5" y="582.9">广东</text>
<text x="905.5" y="600.6">澳门</text>
<text x="919.8" y="597.4">香港</text>
<text x="891.4" y="612.8">海南</text>
<text x="987.4" y="410.4">黑龙江</text>
<text x="980.2" y="425.6">吉林</text>
<text x="968.4" y="441.8">辽宁</text>
<text x="1002.1" y="618.8">南海诸岛</text>
</g>
<defs><linearGradient id="vm" x1="0" y1="0" x2="0" y2="1"><stop offset="0" stop-color="#c0444c"/><stop offset="0.5" stop-color="#d88273"/><stop offset="1" stop-color="#f6efa6"/></linearGradient></defs>
<rect x="631.8" y="558.9" width="15.2" height="110" fill="url(#vm)"/>
<path d="M647 558.9 L655.9 550.3 L655.9 558.9 Z" fill="#c0444c"/>
<text x="660.5" y="557" font-size="9" fill="#333">3</text>
</svg>
</body></html>
